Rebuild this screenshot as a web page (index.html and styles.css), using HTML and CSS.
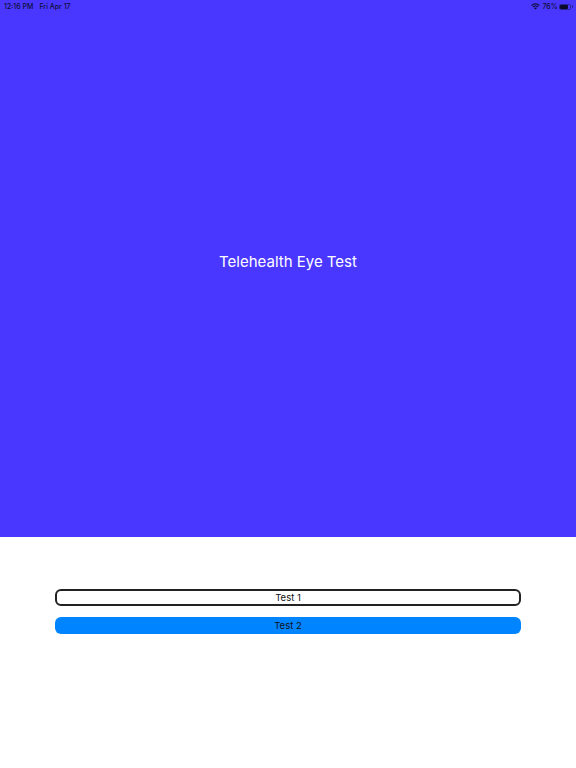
FILE: index.html
```html
<!DOCTYPE html>
<html lang="en">
<head>
<meta charset="utf-8">
<title>Telehealth Eye Test</title>
<link rel="stylesheet" href="styles.css">
</head>
<body>
<main class="screen">
  <section class="hero">
    <div class="status">
      <div class="status-left">
        <span>12:16 PM</span>
        <span>Fri Apr 17</span>
      </div>
      <div class="status-right">
        <svg class="wifi" viewBox="0 0 16 12" aria-hidden="true">
          <path d="M8 11.5 5.6 8.9a3.4 3.4 0 0 1 4.8 0Z"/>
          <path d="M4.5 7.8 3 6.2a7 7 0 0 1 10 0l-1.5 1.6a4.9 4.9 0 0 0-7 0Z"/>
          <path d="M1.9 5.1.4 3.5a10.8 10.8 0 0 1 15.2 0l-1.5 1.6a8.7 8.7 0 0 0-12.2 0Z"/>
        </svg>
        <span>76%</span>
        <div class="battery"><div class="battery-fill"></div></div>
        <div class="battery-cap"></div>
      </div>
    </div>
    <h1 class="title">Telehealth Eye Test</h1>
  </section>
  <section class="actions">
    <button class="btn btn-outline" type="button">Test 1</button>
    <button class="btn btn-filled" type="button">Test 2</button>
  </section>
</main>
</body>
</html>
```

FILE: styles.css
```css
* {
  box-sizing: border-box;
}

html,
body {
  margin: 0;
  height: 100%;
  background: #fff;
}

.screen {
  display: flex;
  flex-direction: column;
  width: 576px;
  height: 768px;
  font-family: Inter, "Liberation Sans", sans-serif;
}

.hero {
  display: flex;
  flex-direction: column;
  height: 537px;
  background: #4a37ff;
}

.status {
  display: flex;
  justify-content: space-between;
  align-items: center;
  height: 13px;
  padding: 0 3.5px 0 4px;
  color: #0d0d33;
  font-size: 7px;
  font-weight: 500;
  line-height: 12px;
}

.status-left {
  display: flex;
  gap: 6px;
}

.status-right {
  display: flex;
  align-items: center;
}

.wifi {
  width: 9px;
  height: 7px;
  margin-right: 2px;
  fill: #0d0d33;
}

.battery {
  width: 12px;
  height: 6px;
  margin-left: 1.5px;
  border: 0.5px solid #2a2390;
  border-radius: 1.5px;
}

.battery-fill {
  width: 76%;
  height: 100%;
  background: #0a0a28;
  border-radius: 1px;
}

.battery-cap {
  width: 1px;
  height: 3px;
  margin-left: 0.25px;
  background: #2a2390;
  border-radius: 0 1px 1px 0;
}

.title {
  margin: 237px 0 0;
  color: #fff;
  font-size: 15px;
  font-weight: 400;
  line-height: 24px;
  text-align: center;
}

.actions {
  display: flex;
  flex-direction: column;
  gap: 11px;
  padding: 52px 55px 0;
}

.btn {
  display: block;
  width: 100%;
  height: 17px;
  padding: 0;
  color: #111;
  font-family: inherit;
  font-size: 9.5px;
  line-height: 13px;
  text-align: center;
  border-radius: 6px;
}

.btn-outline {
  padding-bottom: 1px;
  background: #fff;
  border: 2px solid #222;
}

.btn-filled {
  background: #0084ff;
  border: 0;
}
```
